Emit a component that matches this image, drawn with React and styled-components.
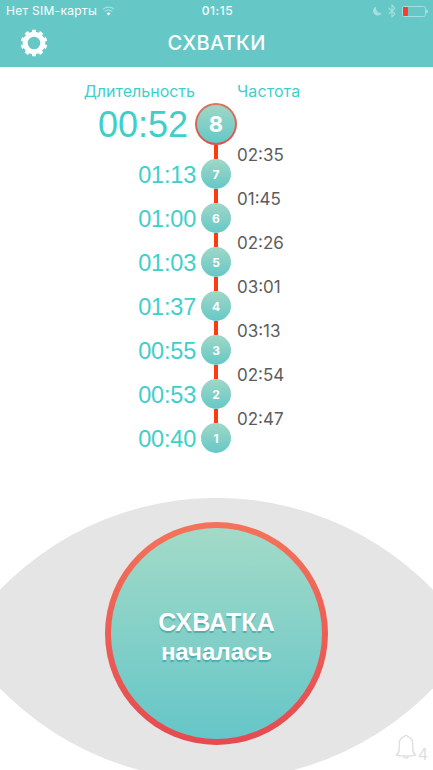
import React from 'react';
import styled, { createGlobalStyle, css } from 'styled-components';

const contractions = [
  { id: 8, duration: '00:52', interval: null },
  { id: 7, duration: '01:13', interval: '02:35' },
  { id: 6, duration: '01:00', interval: '01:45' },
  { id: 5, duration: '01:03', interval: '02:26' },
  { id: 4, duration: '01:37', interval: '03:01' },
  { id: 3, duration: '00:55', interval: '03:13' },
  { id: 2, duration: '00:53', interval: '02:54' },
  { id: 1, duration: '00:40', interval: '02:47' },
];

const GlobalStyle = createGlobalStyle`
  * {
    box-sizing: border-box;
  }
  body {
    margin: 0;
    background: #fff;
    font-family: Inter, "Liberation Sans", sans-serif;
  }
  svg {
    display: block;
  }
`;

const StyledScreen = styled.div`
  display: flex;
  flex-direction: column;
  width: 433px;
  height: 770px;
  overflow: hidden;
  background: #fff;
`;

const StyledHeader = styled.header`
  height: 67px;
  background: #65c8c7;
  color: #fff;
`;

const StyledStatusBar = styled.div`
  display: grid;
  grid-template-columns: 1fr auto 1fr;
  align-items: center;
  height: 22px;
  padding: 0 5px 0 6px;
  font-size: 12px;
  line-height: 22px;
  white-space: nowrap;
`;

const StyledCarrier = styled.div`
  display: flex;
  align-items: center;
  gap: 5px;
  letter-spacing: 0.28px;
`;

const StyledClock = styled.div`
  font-weight: 500;
  padding-left: 1px;
  letter-spacing: 0.5px;
`;

const StyledIndicators = styled.div`
  display: flex;
  align-items: center;
  justify-content: flex-end;
  gap: 6px;
`;

const StyledNavBar = styled.div`
  display: grid;
  grid-template-columns: 60px 1fr 60px;
  align-items: center;
  height: 42px;
`;

const StyledSettings = styled.button`
  margin: 0 0 0 20px;
  padding: 0;
  width: 28px;
  height: 28px;
  border: 0;
  background: none;
`;

const StyledTitle = styled.h1`
  margin: 0;
  text-align: center;
  font-size: 20px;
  font-weight: 500;
  line-height: 42px;
  letter-spacing: 0.3px;
`;

const StyledTimeline = styled.main`
  display: flex;
  flex-direction: column;
  height: 431px;
  padding-top: 13px;
`;

const rowColumns = css`
  display: grid;
  grid-template-columns: 195px 42px 196px;
`;

const StyledLabels = styled.div`
  ${rowColumns}
  height: 23px;
  color: #3fcfca;
  font-size: 16px;
  line-height: 22px;
`;

const StyledDurationLabel = styled.div`
  text-align: right;
  white-space: nowrap;
`;

const StyledIntervalLabel = styled.div`
  grid-column: 3;
  letter-spacing: 0.1px;
`;

const StyledRow = styled.div`
  ${rowColumns}
  height: ${({ $latest }) => ($latest ? '42px' : '44px')};
`;

const StyledDuration = styled.div`
  align-self: end;
  justify-self: end;
  margin-right: ${({ $latest }) => ($latest ? '7px' : '-1px')};
  color: #3fcfca;
  font-family: "Liberation Sans", sans-serif;
  font-size: ${({ $latest }) => ($latest ? '36px' : '23.5px')};
  line-height: ${({ $latest }) => ($latest ? '40px' : '27px')};
  letter-spacing: ${({ $latest }) => ($latest ? '0' : '-0.2px')};
`;

const StyledTrack = styled.div`
  display: flex;
  flex-direction: column;
  align-items: center;
`;

const StyledLink = styled.div`
  flex: 1;
  width: 4px;
  background: #ff3a0d;
`;

const StyledNode = styled.div`
  display: flex;
  align-items: center;
  justify-content: center;
  flex: none;
  width: 30px;
  height: 30px;
  border-radius: 50%;
  background: linear-gradient(#a0d7c6, #65c8c7);
  color: #fff;
  font-size: 12px;
  font-weight: 700;

  ${({ $latest }) => $latest && css`
    width: 42px;
    height: 42px;
    border: 2px solid transparent;
    background:
      linear-gradient(#a0d7c6, #65c8c7) padding-box,
      linear-gradient(#dc7560, #d9534f) border-box;
    font-size: 22px;
  `}
`;

const StyledInterval = styled.div`
  height: 20px;
  color: #5c5c5c;
  font-size: 17px;
  line-height: 20px;
`;

const StyledFooter = styled.footer`
  position: relative;
  display: flex;
  justify-content: center;
  height: 272px;
  padding-top: 24px;
`;

const StyledLens = styled.svg`
  position: absolute;
  top: 0;
  left: 0;
`;

const StyledStart = styled.button`
  position: relative;
  display: flex;
  flex-direction: column;
  align-items: center;
  justify-content: center;
  width: 223px;
  height: 223px;
  padding: 6px 0 0;
  border: 6px solid transparent;
  border-radius: 50%;
  background:
    linear-gradient(#a3dac7, #65c6c8) padding-box,
    linear-gradient(#f4735a, #e54a50) border-box;
  color: #fff;
  font-family: "Liberation Sans", sans-serif;
  font-size: 24px;
  font-weight: 700;
  line-height: 29px;
  text-shadow: 0 1.5px 1px rgba(20, 130, 140, 0.45);
`;

const StyledStartTitle = styled.span`
  font-size: 25px;
  letter-spacing: 0.1px;
`;

const StyledReminders = styled.div`
  position: absolute;
  right: 5px;
  bottom: 8px;
  display: flex;
  align-items: flex-end;
  gap: 1px;
  color: #dedede;
  font-size: 16px;
  line-height: 16px;
`;

const StyledBell = styled.div`
  margin-bottom: 3px;
`;

function WifiIcon() {
  return (
    <svg width="13" height="10" viewBox="0 0 13 10" fill="none" stroke="#fff">
      <path d="M0.8 3.4a8.2 8.2 0 0 1 11.4 0" strokeWidth="1.2" opacity="0.4" />
      <path d="M2.8 5.5a5.3 5.3 0 0 1 7.4 0" strokeWidth="1.2" opacity="0.5" />
      <path d="M6.5 9.6 4.6 7.5a2.8 2.8 0 0 1 3.8 0z" fill="#fff" stroke="none" />
    </svg>
  );
}

function GearIcon() {
  return (
    <svg width="28" height="28" viewBox="-14 -14 28 28" fill="none" stroke="#fff">
      <circle r="8.8" strokeWidth="5" />
      {/* ten teeth, the first one pointing up */}
      <circle
        r="11.9"
        strokeWidth="2.8"
        pathLength="100"
        strokeDasharray="5.2 4.8"
        strokeDashoffset="2.6"
        transform="rotate(-90)"
      />
    </svg>
  );
}

function MoonIcon() {
  return (
    <svg width="9" height="10" viewBox="0 0 9 10">
      <path d="M3.2 0.6A4.6 4.6 0 1 0 8.8 7 4.9 4.9 0 0 1 3.2 0.6z" fill="#a5dfde" />
    </svg>
  );
}

function BluetoothIcon() {
  return (
    <svg width="8" height="14" viewBox="0 0 8 14" fill="none" stroke="#a5dfde" strokeWidth="1.1">
      <path d="M0.7 4 7 9.8 4 12.8V1.2l3 3L0.7 10" />
    </svg>
  );
}

function BatteryIcon() {
  return (
    <svg width="26" height="11" viewBox="0 0 26 11">
      <rect x="0.5" y="0.5" width="23" height="10" rx="1.8" fill="none" stroke="#a5dfde" />
      <rect x="1" y="1" width="5" height="9" rx="0.8" fill="#ff3b30" />
      <path d="M24.5 3.6c1.6 0.6 1.6 3.2 0 3.8z" fill="#d4f0ef" />
    </svg>
  );
}

function BellIcon() {
  return (
    <svg width="22" height="25" viewBox="0 0 22 25" fill="none" stroke="#dedede" strokeWidth="1.3">
      <path d="M9.2 2.6a1.9 1.9 0 0 1 3.6 0c3.4 0.8 5 3.3 5 7.3v5.3c0 2.6 0.8 4.4 2.7 5.9-2.6 0.9-5.4 1.1-9.5 1.1s-6.9-0.2-9.5-1.1c1.9-1.5 2.7-3.3 2.7-5.9V9.9c0-4 1.6-6.5 5-7.3z" />
      <path d="M8.4 22.2c0.4 1.3 1.3 1.9 2.6 1.9s2.2-0.6 2.6-1.9" />
    </svg>
  );
}

function ContractionRow({ contraction, latest }) {
  const { id, duration, interval } = contraction;
  return (
    <StyledRow $latest={latest}>
      <StyledDuration $latest={latest}>{duration}</StyledDuration>
      <StyledTrack>
        {!latest && <StyledLink />}
        <StyledNode $latest={latest}>{id}</StyledNode>
      </StyledTrack>
      {interval && <StyledInterval>{interval}</StyledInterval>}
    </StyledRow>
  );
}

export default function App() {
  return (
    <StyledScreen>
      <GlobalStyle />
      <StyledHeader>
        <StyledStatusBar>
          <StyledCarrier>
            Нет SIM-карты
            <WifiIcon />
          </StyledCarrier>
          <StyledClock>01:15</StyledClock>
          <StyledIndicators>
            <MoonIcon />
            <BluetoothIcon />
            <BatteryIcon />
          </StyledIndicators>
        </StyledStatusBar>
        <StyledNavBar>
          <StyledSettings>
            <GearIcon />
          </StyledSettings>
          <StyledTitle>СХВАТКИ</StyledTitle>
        </StyledNavBar>
      </StyledHeader>
      <StyledTimeline>
        <StyledLabels>
          <StyledDurationLabel>Длительность</StyledDurationLabel>
          <StyledIntervalLabel>Частота</StyledIntervalLabel>
        </StyledLabels>
        {contractions.map((contraction, index) => (
          <ContractionRow
            key={contraction.id}
            contraction={contraction}
            latest={index === 0}
          />
        ))}
      </StyledTimeline>
      <StyledFooter>
        <StyledLens width="433" height="272" viewBox="0 498 433 272">
          <path d="M-38.5 639A301 301 0 0 1 471.5 639A301 301 0 0 1-38.5 639z" fill="#e5e5e5" />
        </StyledLens>
        <StyledStart>
          <StyledStartTitle>СХВАТКА</StyledStartTitle>
          <span>началась</span>
        </StyledStart>
        <StyledReminders>
          <StyledBell>
            <BellIcon />
          </StyledBell>
          4
        </StyledReminders>
      </StyledFooter>
    </StyledScreen>
  );
}
